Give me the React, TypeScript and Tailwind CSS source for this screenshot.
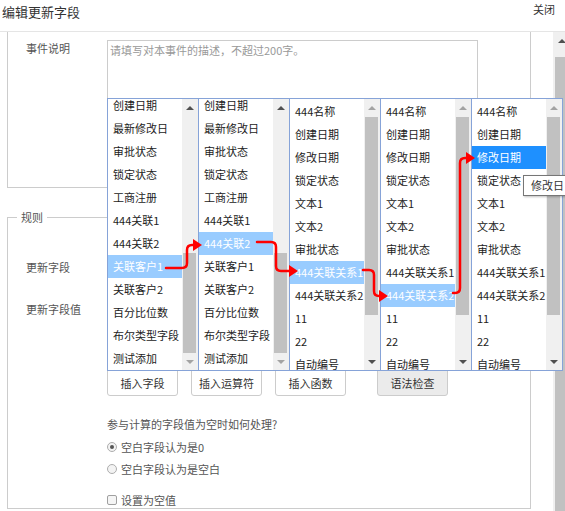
import React from 'react';

const fieldsA = ['创建日期', '最新修改日', '审批状态', '锁定状态', '工商注册', '444关联1', '444关联2', '关联客户1', '关联客户2', '百分比位数', '布尔类型字段', '测试添加'];
const fieldsB = ['444名称', '创建日期', '修改日期', '锁定状态', '文本1', '文本2', '审批状态', '444关联关系1', '444关联关系2', '11', '22', '自动编号'];

interface ColumnProps {
  items: string[];
  selected: number;
  active?: boolean;
  atTop?: boolean;
  last?: boolean;
}

const Arrow: React.FC<{ up?: boolean; enabled?: boolean }> = ({ up, enabled }) => {
  const color = enabled ? 'border-b-[#505050]' : 'border-b-[#a3a3a3]';
  const colorDown = enabled ? 'border-t-[#505050]' : 'border-t-[#a3a3a3]';
  return up ? (
    <span className={`block h-0 w-0 border-x-[4px] border-b-[4px] border-x-transparent ${color}`} />
  ) : (
    <span className={`block h-0 w-0 border-x-[4px] border-t-[4px] border-x-transparent ${colorDown}`} />
  );
};

const Column: React.FC<ColumnProps> = ({ items, selected, active, atTop, last }) => {
  return (
    <div className={`flex h-[273px] border-y border-l border-[#86a3d8] bg-white ${last ? 'w-[92px] border-r' : 'w-[91px]'}`}>
      <div className="w-[74px] overflow-hidden">
        <div className={atTop ? 'pt-[1px]' : '-mt-[5px]'}>
          {items.map((item, i) => {
            const isSel = i === selected;
            let cls = 'text-[#222]';
            if (isSel) cls = active ? 'bg-[#1e90ff] text-white' : 'bg-[#99ccff] text-white';
            return (
              <div key={item} className={`h-[23px] whitespace-nowrap pl-[5px] leading-[23px] ${cls}`}>
                {item}
              </div>
            );
          })}
        </div>
      </div>
      <div className="flex w-[16px] flex-col bg-[#f0f0f0]">
        <div className="flex h-[17px] items-center justify-center">
          <Arrow up enabled={!atTop} />
        </div>
        <div className="flex-1">
          <div className={`ml-[1px] mr-[2px] bg-[#c1c1c1] ${atTop ? 'mt-[1px] h-[198px]' : 'mt-[137px] h-[100px]'}`} />
        </div>
        <div className="flex h-[17px] items-center justify-center">
          <Arrow enabled={atTop} />
        </div>
      </div>
    </div>
  );
};

const Radio: React.FC<{ checked?: boolean; label: string }> = ({ checked, label }) => (
  <label className="flex items-center gap-[4px] leading-[16px]">
    <span className="flex h-[10px] w-[10px] items-center justify-center rounded-full border border-[#adadad] bg-[#f3f3f3]">
      {checked && <span className="h-[4px] w-[4px] rounded-full bg-[#555]" />}
    </span>
    {label}
  </label>
);

export default function App() {
  const buttons = ['插入字段', '插入运算符', '插入函数'];

  return (
    <div className="relative h-[511px] w-[565px] overflow-hidden bg-white font-['Noto_Sans_CJK_SC','Noto_Sans',sans-serif] text-[11px] text-[#555]">
      <header className="flex h-[32px] items-start justify-between border-b border-[#e5e5e5] pl-[2px] pr-[10px]">
        <h1 className="pt-[3px] text-[13px] leading-[18px] text-[#333]">编辑更新字段</h1>
        <button className="pt-[1px] text-[11px] leading-[16px] text-[#333]">关闭</button>
      </header>

      <div className="flex h-[479px] w-[570px]">
        <div className="w-[553px] shrink-0 pl-[7px]">
          {/* 事件说明 */}
          <div className="flex h-[156px] w-[524px] items-start border-x border-b border-[#ccc] pt-[8px]">
            <div className="w-[99px] shrink-0 pl-[18px] leading-[16px]">事件说明</div>
            <textarea
              className="h-[100px] w-[371px] resize-none border border-[#ccc] px-[2px] py-[1px] leading-[16px] text-[#333] outline-none placeholder:text-[#999]"
              placeholder="请填写对本事件的描述，不超过200字。"
            />
          </div>

          {/* 规则 */}
          <fieldset className="mt-[21px] w-[524px] border border-[#ccc]">
            <legend className="ml-[9px] px-[4px] leading-[16px]">规则</legend>
            <div className="pt-[28px]">
              <div className="flex h-[28px] items-center">
                <div className="w-[99px] shrink-0 pl-[18px] leading-[16px]">更新字段</div>
                <div className="h-[28px] w-[200px] border border-[#ccc]" />
              </div>
              <div className="mt-[14px] flex items-start">
                <div className="w-[99px] shrink-0 pl-[18px] pt-[6px] leading-[16px]">更新字段值</div>
                <div>
                  <div className="h-[72px] w-[371px] border border-[#ccc]" />
                  <div className="flex">
                    <div className="flex gap-[13px]">
                      {buttons.map((b) => (
                        <button key={b} className="h-[29px] w-[71px] rounded-[3px] border border-[#ccc] bg-white pt-[3px] text-[#333]">
                          {b}
                        </button>
                      ))}
                    </div>
                    <button className="ml-[31px] h-[29px] w-[71px] rounded-[3px] border border-[#ccc] bg-[#ebebeb] pt-[3px] text-[#333]">
                      语法检查
                    </button>
                  </div>
                </div>
              </div>
              <div className="pl-[99px]">
                <p className="mt-[20px] leading-[16px]">参与计算的字段值为空时如何处理?</p>
                <div className="mt-[7px]">
                  <Radio checked label="空白字段认为是0" />
                </div>
                <div className="mt-[6px]">
                  <Radio label="空白字段认为是空白" />
                </div>
                <label className="mt-[15px] flex items-center gap-[4px] leading-[16px]">
                  <span className="h-[10px] w-[10px] rounded-[2px] border border-[#a0a0a0] bg-[#f5f5f5]" />
                  设置为空值
                </label>
              </div>
            </div>
          </fieldset>
        </div>

        {/* page scrollbar */}
        <div className="flex w-[17px] shrink-0 flex-col bg-[#f0f0f0]">
          <div className="flex h-[17px] items-center justify-center">
            <Arrow up enabled />
          </div>
          <div className="mx-[2px] mt-[8px] flex-1 bg-[#c1c1c1]" />
        </div>
      </div>

      {/* cascading field picker */}
      <div className="absolute left-[107px] top-[98px] z-10 flex">
        <Column items={fieldsA} selected={7} />
        <Column items={fieldsA} selected={6} />
        <Column items={fieldsB} selected={7} atTop />
        <Column items={fieldsB} selected={8} atTop />
        <Column items={fieldsB} selected={2} atTop active last />
      </div>

      <div className="absolute left-[523px] top-[175px] z-20 h-[21px] whitespace-nowrap border border-[#767676] bg-white px-[7px] text-[11px] leading-[19px] text-[#333] shadow-[1px_1px_2px_rgba(0,0,0,0.25)]">
        修改日
      </div>

      <svg className="pointer-events-none absolute inset-0 z-30" width="565" height="511" viewBox="0 0 565 511">
        <g fill="none" stroke="#ff0000" strokeWidth="2.5" strokeLinecap="round" strokeLinejoin="round">
          <path d="M166 268 H182 Q187 268 187 263 V250 Q187 245 192 245 H194" />
          <path d="M257 242 H271 Q276 242 276 247 V266 Q276 271 281 271 H290" />
          <path d="M363 270 H369 Q374 270 374 275 V291 Q374 296 379 296 H380" />
          <path d="M453 293 H455 Q460 293 460 288 V163 Q460 158 465 158 H467" />
        </g>
        <g fill="#ff0000">
          <path d="M193 239 L202 245 L193 251 Z" />
          <path d="M289 265 L298 271 L289 277 Z" />
          <path d="M379 290 L388 296 L379 302 Z" />
          <path d="M466 152 L475 158 L466 164 Z" />
        </g>
      </svg>
    </div>
  );
}
